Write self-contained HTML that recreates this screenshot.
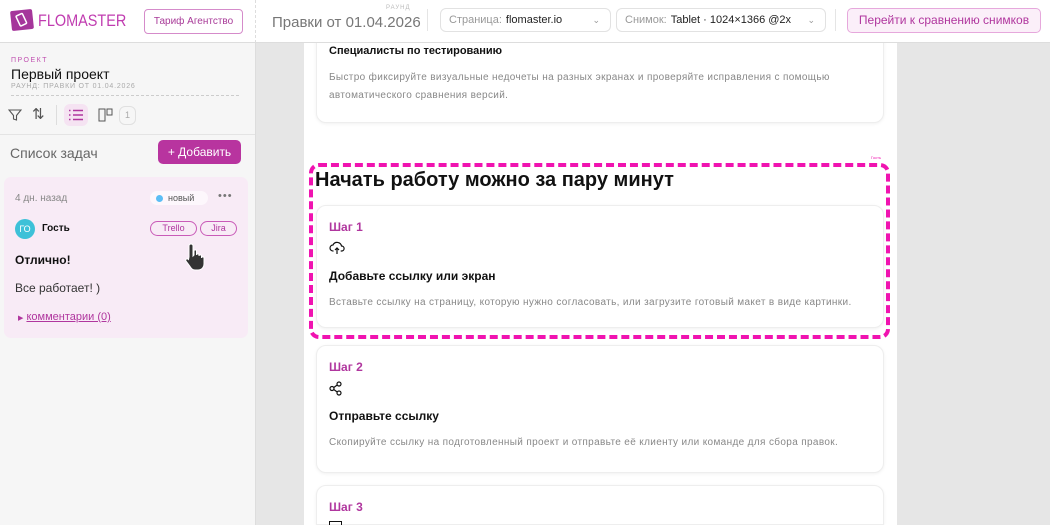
<!DOCTYPE html>
<html><head><meta charset="utf-8"><style>
*{box-sizing:border-box;margin:0;padding:0}
html,body{width:1050px;height:525px;overflow:hidden}
body{font-family:"Liberation Sans",sans-serif;background:#e6e6e6;position:relative;color:#111}
.hdr{position:absolute;left:0;top:0;width:1050px;height:43px;background:#fff;border-bottom:1px solid #ddd;z-index:2}
.abs{position:absolute}
.side{position:absolute;left:0;top:43px;width:256px;height:482px;background:#f6f6f6;border-right:1px solid #ddd;overflow:hidden}
.page{position:absolute;left:304px;top:43px;width:593px;height:482px;background:#fff;overflow:hidden}
.card{position:absolute;left:12px;width:568px;background:#fff;border:1px solid #eee;border-radius:10px;box-shadow:0 1px 3px rgba(0,0,0,.06)}
.step{font-size:12px;color:#b0369e;font-weight:bold;position:absolute;left:12px}
.ttl{font-size:12px;font-weight:bold;position:absolute;left:12px}
.desc{font-size:10px;color:#888;position:absolute;left:12px;letter-spacing:.35px;white-space:nowrap}
.sel{position:absolute;top:8px;height:24px;border:1px solid #e2e2e2;border-radius:6px;font-size:11px;line-height:22px;padding-left:8px;color:#999}
.sel b{font-weight:normal;color:#222;margin-left:4px}
.chev{position:absolute;right:10px;top:0;color:#999;font-size:9px}
</style></head><body>
<div class="hdr">
 <svg class="abs" style="left:10px;top:9px" width="24" height="22" viewBox="0 0 24 22"><rect x="1" y="1" width="22" height="20" rx="2" fill="#a5369b" transform="rotate(-6 12 11)"/><rect x="8" y="5" width="7" height="11" rx="1" fill="none" stroke="#fff" stroke-width="1.5" transform="rotate(-25 12 11)"/></svg>
 <div class="abs" style="left:38px;top:11px;font-size:17px;color:#c03cb0;transform:scaleX(.85);transform-origin:0 0">FLOMASTER</div>
 <div class="abs" style="left:144px;top:9px;width:99px;height:25px;border:1px solid #d58bca;border-radius:4px;font-size:10px;color:#a83a98;text-align:center;line-height:23px">Тариф Агентство</div>
 <div class="abs" style="left:255px;top:0;height:43px;border-left:1px dashed #ddd"></div>
 <div class="abs" style="left:386px;top:5px;font-size:6px;color:#bbb;letter-spacing:1px">РАУНД</div>
 <div class="abs" style="left:272px;top:14px;font-size:15px;color:#777">Правки от 01.04.2026</div>
 <div class="abs" style="left:427px;top:9px;height:22px;border-left:1px solid #e5e5e5"></div>
 <div class="sel" style="left:440px;width:171px">Страница:<b>flomaster.io</b><span class="chev">⌄</span></div>
 <div class="sel" style="left:616px;width:210px">Снимок:<b>Tablet · 1024×1366 @2x</b><span class="chev">⌄</span></div>
 <div class="abs" style="left:835px;top:9px;height:22px;border-left:1px solid #e5e5e5"></div>
 <div class="abs" style="left:847px;top:8px;width:194px;height:25px;border:1px solid #e6a8dc;background:#fbeff9;border-radius:5px;font-size:12px;color:#b0369e;text-align:center;line-height:23px">Перейти к сравнению снимков</div>
</div>
<div class="side">
 <div class="abs" style="left:11px;top:14px;font-size:7px;color:#c050b0;letter-spacing:1.5px">ПРОЕКТ</div>
 <div class="abs" style="left:11px;top:23px;font-size:14px;color:#111">Первый проект</div>
 <div class="abs" style="left:11px;top:40px;font-size:7px;color:#aaa;letter-spacing:.8px">РАУНД: ПРАВКИ ОТ 01.04.2026</div>
 <div class="abs" style="left:11px;top:52px;width:228px;border-top:1px dashed #ccc"></div>
 <svg class="abs" style="left:8px;top:65px" width="14" height="14" viewBox="0 0 14 14"><path d="M1 2h12L8.5 7.5V12L5.5 11V7.5z" fill="none" stroke="#555" stroke-width="1.1"/></svg>
 <div class="abs" style="left:32px;top:62px;font-size:15px;color:#555">⇅</div>
 <div class="abs" style="left:56px;top:62px;height:20px;border-left:1px solid #ddd"></div>
 <div class="abs" style="left:64px;top:61px;width:24px;height:22px;background:#f5e3f2;border-radius:6px"></div>
 <svg class="abs" style="left:68px;top:66px" width="16" height="12" viewBox="0 0 16 12"><g stroke="#b0369e" stroke-width="1.4"><path d="M1 1.5h1.5M1 6h1.5M1 10.5h1.5M5 1.5h10M5 6h10M5 10.5h10"/></g></svg>
 <svg class="abs" style="left:98px;top:65px" width="16" height="14" viewBox="0 0 16 14"><rect x="1" y="1" width="6" height="12" fill="none" stroke="#555"/><rect x="9" y="1" width="5" height="6" fill="none" stroke="#555"/></svg>
 <div class="abs" style="left:119px;top:63px;width:17px;height:19px;border:1px solid #e0e0e0;border-radius:6px;font-size:9px;color:#aaa;text-align:center;line-height:17px">1</div>
 <div class="abs" style="left:0;top:91px;width:255px;border-top:1px solid #e4e4e4"></div>
 <div class="abs" style="left:10px;top:102px;font-size:14px;color:#666">Список задач</div>
 <div class="abs" style="left:158px;top:97px;width:83px;height:24px;background:#b8349f;border-radius:5px;color:#fff;font-size:12px;text-align:center;line-height:24px">+ Добавить</div>
 <div class="abs" style="left:4px;top:134px;width:244px;height:161px;background:#f8ebf6;border-radius:7px">
  <div class="abs" style="left:11px;top:16px;font-size:10px;color:#888">4 дн. назад</div>
  <div class="abs" style="left:146px;top:14px;width:58px;height:14px;background:#fdf7fc;border-radius:7px;font-size:9px;color:#555;line-height:14px;padding-left:18px">новый<span class="abs" style="left:6px;top:4px;width:7px;height:7px;border-radius:50%;background:#5bbef5"></span></div>
  <div class="abs" style="left:214px;top:13px;font-size:11px;color:#777;letter-spacing:1px">•••</div>
  <div class="abs" style="left:11px;top:42px;width:20px;height:20px;border-radius:50%;background:#3dc1d8;color:#fff;font-size:9px;text-align:center;line-height:20px">ГО</div>
  <div class="abs" style="left:38px;top:46px;font-size:10px;font-weight:bold">Гость</div>
  <div class="abs" style="left:146px;top:44px;width:47px;height:15px;border:1px solid #c95bb8;border-radius:8px;font-size:9px;color:#b0369e;text-align:center;line-height:13px">Trello</div>
  <div class="abs" style="left:196px;top:44px;width:37px;height:15px;border:1px solid #c95bb8;border-radius:8px;font-size:9px;color:#b0369e;text-align:center;line-height:13px">Jira</div>
  <svg class="abs" style="left:180px;top:64px" width="28" height="32" viewBox="0 0 28 32"><path d="M7 3c1.5 0 2 1 2 2v10l1-1V10c0-1.5 2.5-1.5 2.5 0v4c0-1.5 2.5-1.5 2.5 0v1c0-1.5 2.5-1.5 2.5 0v2c0-1.5 2.5-1.5 2.5 0v6c0 3-2 6-6 6h-3c-3 0-4-2-6-5l-3-4c-1-1.5 1-3 2.5-1.5L5 16V5c0-1 .5-2 2-2z" fill="#333" stroke="#fff" stroke-width="1"/></svg>
 </div>
 <div class="abs" style="left:15px;top:210px;font-size:12px;font-weight:bold">Отлично!</div>
 <div class="abs" style="left:15px;top:238px;font-size:12px;color:#333">Все работает! )</div>
 <div class="abs" style="left:18px;top:268px;font-size:11px;color:#b0369e"><span style="font-size:7px">▶</span> <u>комментарии (0)</u></div>
</div>
<div class="page">
 <div class="card" style="top:-12px;height:92px">
  <div class="ttl" style="top:13px;font-size:11px">Специалисты по тестированию</div>
  <div class="desc" style="top:37px;width:550px;line-height:18px;white-space:normal">Быстро фиксируйте визуальные недочеты на разных экранах и проверяйте исправления с помощью автоматического сравнения версий.</div>
 </div>
 <div class="abs" style="left:5px;top:120px;width:581px;height:176px;border:4px dashed #f013b0;border-radius:10px"></div>
 <div class="abs" style="left:567px;top:112px;font-size:4px;color:#f013b0">Гость</div>
 <div class="abs" style="left:11px;top:126px;font-size:20px;font-weight:bold">Начать работу можно за пару минут</div>
 <div class="card" style="top:162px;height:123px">
  <div class="step" style="top:14px">Шаг 1</div>
  <svg class="abs" style="left:12px;top:35px" width="16" height="14" viewBox="0 0 16 14"><path d="M4.5 10H4a3 3 0 0 1 0-6 4.5 4.5 0 0 1 8.5 1 2.5 2.5 0 0 1 .2 5h-1" fill="none" stroke="#111" stroke-width="1.2"/><path d="M8 13V7M6 9l2-2 2 2" fill="none" stroke="#111" stroke-width="1.2"/></svg>
  <div class="ttl" style="top:63px">Добавьте ссылку или экран</div>
  <div class="desc" style="top:91px">Вставьте ссылку на страницу, которую нужно согласовать, или загрузите готовый макет в виде картинки.</div>
 </div>
 <div class="card" style="top:302px;height:128px">
  <div class="step" style="top:14px">Шаг 2</div>
  <svg class="abs" style="left:12px;top:35px" width="14" height="15" viewBox="0 0 14 15"><g fill="none" stroke="#111" stroke-width="1.2"><circle cx="10" cy="3" r="2"/><circle cx="3" cy="7.5" r="2"/><circle cx="10" cy="12" r="2"/><path d="M4.8 6.5 8.2 4M4.8 8.5l3.4 2.5"/></g></svg>
  <div class="ttl" style="top:63px">Отправьте ссылку</div>
  <div class="desc" style="top:91px">Скопируйте ссылку на подготовленный проект и отправьте её клиенту или команде для сбора правок.</div>
 </div>
 <div class="card" style="top:442px;height:40px;border-bottom-left-radius:0;border-bottom-right-radius:0">
  <div class="step" style="top:14px">Шаг 3</div>
  <div class="abs" style="left:12px;top:35px;width:13px;height:5px;border:1.2px solid #111;border-bottom:none"></div>
 </div>
</div>
</body></html>
